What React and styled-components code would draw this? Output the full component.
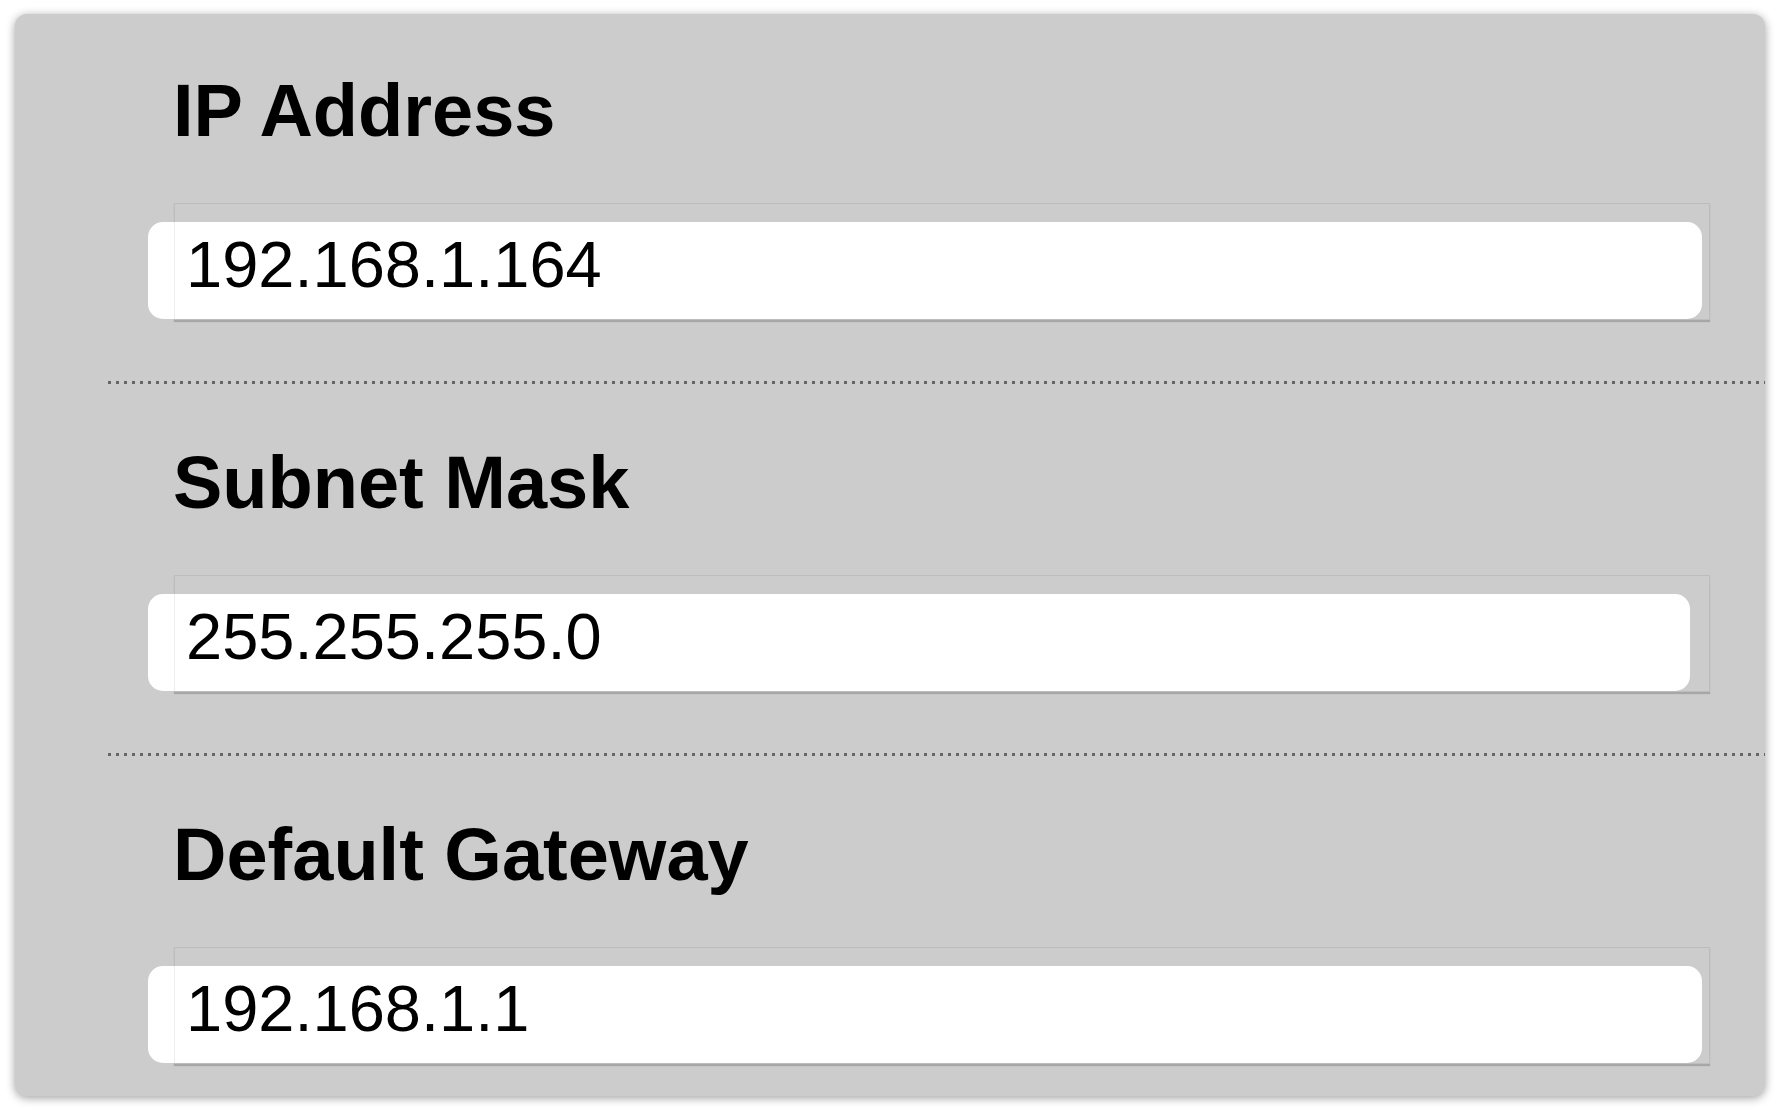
import React from "react";
import styled, {createGlobalStyle} from "styled-components";

const fields = [
  {label: "IP Address", value: "192.168.1.164", inset: 8},
  {label: "Subnet Mask", value: "255.255.255.0", inset: 20},
  {label: "Default Gateway", value: "192.168.1.1", inset: 8},
];

const App = () => {
  return <Page>
    <GlobalStyle/>
    <Panel>
      {fields.map((field, i) => (
        <Section key={field.label}>
          <Label>{field.label}</Label>
          <Frame>
            <Input type="text" defaultValue={field.value} $inset={field.inset}/>
          </Frame>
          {i < fields.length - 1 && <Separator/>}
        </Section>
      ))}
    </Panel>
  </Page>
};

const GlobalStyle = createGlobalStyle`
  html, body {
    margin: 0;
    padding: 0;
    background: #ffffff;
  }
  body {
    font-family: "Liberation Sans", Arial, sans-serif;
  }
`;

const Page = styled.div`
  width: 1780px;
  height: 1112px;
  padding: 14px 15px 0 15px;
  box-sizing: border-box;
`;

const Panel = styled.div`
  background: #cccccc;
  border-radius: 12px;
  box-shadow: 0 2px 10px rgba(0, 0, 0, 0.38);
  padding: 60px 0 32px 0;
  display: flex;
  flex-direction: column;
`;

const Section = styled.div`
  display: flex;
  flex-direction: column;
`;

const Label = styled.h2`
  margin: 0 0 55px 0;
  padding-left: 158px;
  font-family: "Liberation Sans", Arial, sans-serif;
  font-weight: bold;
  font-size: 74px;
  line-height: 74px;
  color: #000000;
`;

const Frame = styled.div`
  position: relative;
  margin: 0 55px 0 159px;
  padding: 19px 0 1px 0;
  box-shadow: 0 2px 1px rgba(0, 0, 0, 0.18);

  &::after {
    content: "";
    position: absolute;
    inset: 0;
    border: 1px solid rgba(0, 0, 0, 0.07);
    pointer-events: none;
  }
`;

const Input = styled.input`
  display: block;
  box-sizing: border-box;
  margin-left: -26px;
  width: calc(100% + 26px - ${p => p.$inset}px);
  height: 97px;
  padding: 0 0 13px 38px;
  border: none;
  outline: none;
  border-radius: 15px;
  background: #ffffff;
  font-family: "Liberation Sans", Arial, sans-serif;
  font-size: 65px;
  color: #000000;
`;

const Separator = styled.div`
  height: 3px;
  margin: 61px 0 62px 93px;
  background-image: linear-gradient(to right, #666666 0 3px, transparent 3px 8px);
  background-size: 8px 3px;
  background-repeat: repeat-x;
`;

export default App;
